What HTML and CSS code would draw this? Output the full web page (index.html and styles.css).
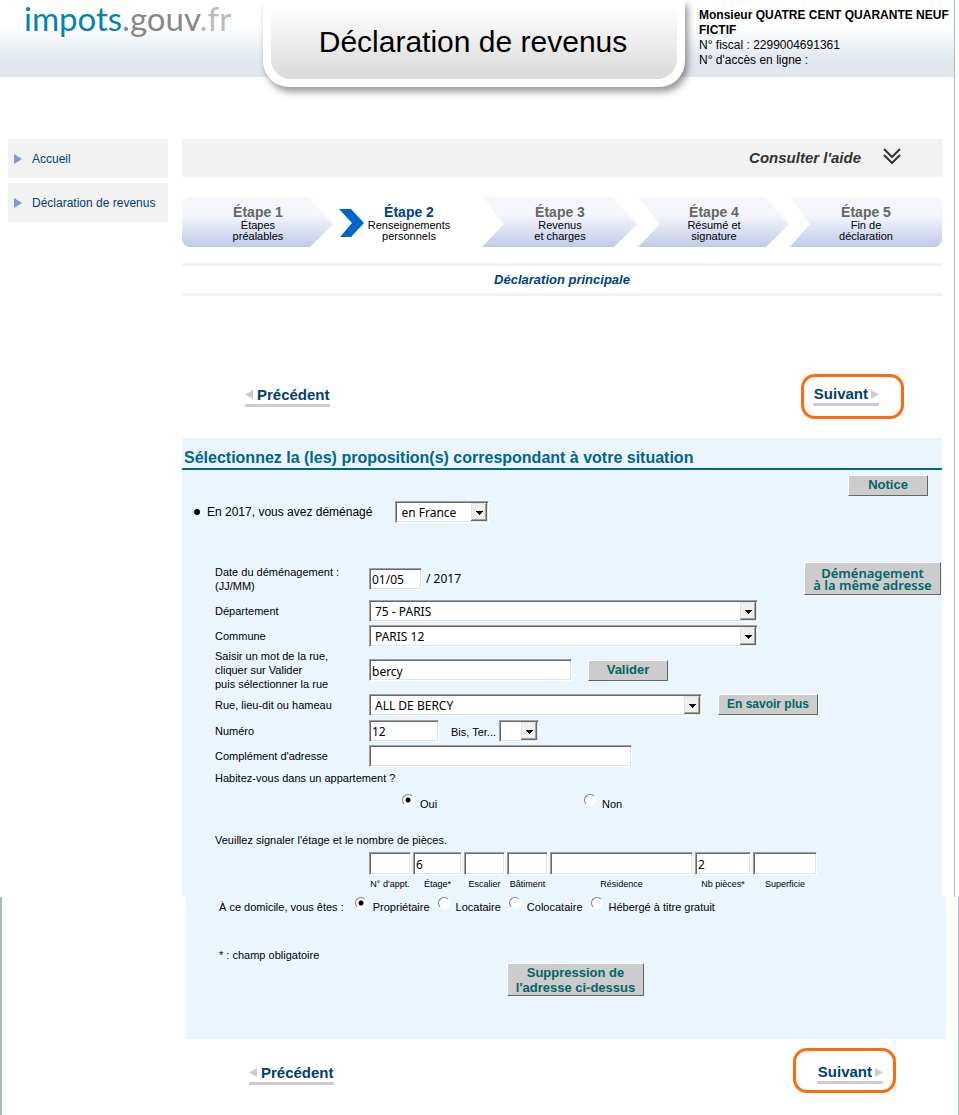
FILE: index.html
```html
<!DOCTYPE html>
<html lang="fr">
<head>
<meta charset="utf-8">
<title>impots.gouv.fr - Déclaration de revenus</title>
<link rel="stylesheet" href="styles.css">
</head>
<body>
<form class="page">
  <div class="sheet sheet-top">
    <header class="banner">
      <a class="logo" href="#"><span class="logo-main">impots</span><span class="logo-gouv">.gouv</span><span class="logo-fr">.fr</span></a>
      <h1 class="plaque"><span class="plaque-face">Déclaration de revenus</span></h1>
      <div class="user">
        <strong>Monsieur QUATRE CENT QUARANTE NEUF FICTIF</strong>
        <span>N° fiscal : 2299004691361</span>
        <span>N° d'accès en ligne :</span>
      </div>
    </header>

    <div class="columns">
      <nav class="sidebar">
        <a class="side-link" href="#"><svg width="8" height="10" viewBox="0 0 8 10"><path d="M0 0L8 5L0 10Z" fill="#8399d6"/></svg>Accueil</a>
        <a class="side-link" href="#"><svg width="8" height="10" viewBox="0 0 8 10"><path d="M0 0L8 5L0 10Z" fill="#8399d6"/></svg>Déclaration de revenus</a>
      </nav>

      <main class="main">
        <a class="help" href="#">Consulter l'aide
          <svg width="18" height="16" viewBox="0 0 18 16" fill="none" stroke="#333" stroke-width="2"><path d="M1 1L9 9L17 1M1 7L9 15L17 7"/></svg>
        </a>

        <ol class="steps">
          <li class="step step-first"><b>Étape 1</b><span>Étapes<br>préalables</span></li>
          <li class="step step-current">
            <svg width="25" height="28" viewBox="0 0 25 28"><path d="M0 0H12L25 14L12 28H1L13 14Z" fill="#0066cc"/></svg>
            <b>Étape 2</b><span>Renseignements<br>personnels</span></li>
          <li class="step step-mid"><b>Étape 3</b><span>Revenus<br>et charges</span></li>
          <li class="step step-mid"><b>Étape 4</b><span>Résumé et<br>signature</span></li>
          <li class="step step-last"><b>Étape 5</b><span>Fin de<br>déclaration</span></li>
        </ol>

        <p class="subtitle">Déclaration principale</p>

        <div class="pager">
          <a class="page-link" href="#"><svg width="8" height="9" viewBox="0 0 8 9"><path d="M8 0L0 4.500L8 9Z" fill="#ccc"/></svg>Précédent</a>
          <div class="highlight"><a class="page-link page-next" href="#">Suivant<svg width="8" height="9" viewBox="0 0 8 9"><path d="M0 0L8 4.500L0 9Z" fill="#ccc"/></svg></a></div>
        </div>

        <section class="panel">
          <h2 class="panel-title">Sélectionnez la (les) proposition(s) correspondant à votre situation</h2>
          <div class="notice-row"><button type="button" class="btn">Notice</button></div>
          <div class="move-row">
            <label for="move">En 2017, vous avez déménagé</label>
            <select id="move" class="field select-move"><option>en France</option></select>
          </div>

          <div class="rows">
            <div class="row row-date">
              <label for="date">Date du déménagement :<br>(JJ/MM)</label>
              <div class="controls">
                <input id="date" class="field input-date" type="text" value="01/05">
                <span class="year">/ 2017</span>
                <button type="button" class="btn btn-move">Déménagement<br>à la même adresse</button>
              </div>
            </div>
            <div class="row">
              <label for="dept">Département</label>
              <div class="controls"><select id="dept" class="field select-wide"><option>75 - PARIS</option></select></div>
            </div>
            <div class="row">
              <label for="city">Commune</label>
              <div class="controls"><select id="city" class="field select-wide"><option>PARIS 12</option></select></div>
            </div>
            <div class="row row-search">
              <label for="word">Saisir un mot de la rue,<br>cliquer sur Valider<br>puis sélectionner la rue</label>
              <div class="controls">
                <input id="word" class="field input-word" type="text" value="bercy">
                <button type="button" class="btn btn-after">Valider</button>
              </div>
            </div>
            <div class="row row-street">
              <label for="street">Rue, lieu-dit ou hameau</label>
              <div class="controls">
                <select id="street" class="field select-street"><option>ALL DE BERCY</option></select>
                <button type="button" class="btn btn-after btn-more">En savoir plus</button>
              </div>
            </div>
            <div class="row">
              <label for="num">Numéro</label>
              <div class="controls">
                <input id="num" class="field input-num" type="text" value="12">
                <label class="bis-label" for="bis">Bis, Ter...</label>
                <select id="bis" class="field select-bis"><option></option></select>
              </div>
            </div>
            <div class="row">
              <label for="extra">Complément d'adresse</label>
              <div class="controls"><input id="extra" class="field input-extra" type="text"></div>
            </div>
            <p class="question">Habitez-vous dans un appartement ?</p>
            <div class="yes-no">
              <label class="choice"><input type="radio" name="flat" checked><span>Oui</span></label>
              <label class="choice"><input type="radio" name="flat"><span>Non</span></label>
            </div>
            <p class="rooms-text">Veuillez signaler l'étage et le nombre de pièces.</p>
            <div class="rooms">
              <label><input class="field" type="text"><span>N° d'appt.</span></label>
              <label><input class="field" type="text" value="6"><span>Étage*</span></label>
              <label><input class="field" type="text"><span>Escalier</span></label>
              <label><input class="field" type="text"><span>Bâtiment</span></label>
              <label><input class="field" type="text"><span>Résidence</span></label>
              <label><input class="field" type="text" value="2"><span>Nb pièces*</span></label>
              <label><input class="field" type="text"><span>Superficie</span></label>
            </div>
          </div>
        </section>
      </main>
    </div>
  </div>

  <div class="sheet sheet-bottom">
    <section class="panel panel-bottom">
      <div class="status">
        <span class="status-label">À ce domicile, vous êtes :</span>
        <label class="choice"><input type="radio" name="status" checked><span>Propriétaire</span></label>
        <label class="choice"><input type="radio" name="status"><span>Locataire</span></label>
        <label class="choice"><input type="radio" name="status"><span>Colocataire</span></label>
        <label class="choice"><input type="radio" name="status"><span>Hébergé à titre gratuit</span></label>
      </div>
      <p class="required">* : champ obligatoire</p>
      <button type="button" class="btn btn-delete">Suppression de<br>l'adresse ci-dessus</button>
    </section>
    <div class="pager pager-bottom">
      <a class="page-link" href="#"><svg width="8" height="9" viewBox="0 0 8 9"><path d="M8 0L0 4.500L8 9Z" fill="#ccc"/></svg>Précédent</a>
      <div class="highlight highlight-bottom"><a class="page-link page-next" href="#">Suivant<svg width="8" height="9" viewBox="0 0 8 9"><path d="M0 0L8 4.500L0 9Z" fill="#ccc"/></svg></a></div>
    </div>
  </div>
</form>
</body>
</html>
```

FILE: styles.css
```css
* { box-sizing: border-box; }

body {
  margin: 0;
  background: #fff;
  color: #000;
  font: 11px/14px "Liberation Sans", Arial, sans-serif;
}

h1, h2, p, ol { margin: 0; padding: 0; font-weight: normal; }
a { text-decoration: none; }
svg { flex: none; }

.page { display: flex; flex-direction: column; min-height: 100vh; }
.sheet-top { margin-right: 4px; border-right: 1px solid #a9bcc5; }
.sheet-bottom {
  flex: 1;
  padding: 0 12px 20px 184px;
  border-left: 2px solid #a9bcc5;
  border-right: 1px solid #a9bcc5;
}

/* Banner */
.banner {
  display: flex;
  height: 77px;
  background: linear-gradient(#fff 26px, #e0e8ee 60px);
}
.logo {
  width: 263px;
  padding-left: 24px;
  font: 400 33px/36px Lato, sans-serif;
}
.logo-main { color: #0085b2; }
.logo-gouv { color: #888; }
.logo-fr { color: #bbb; }
.plaque {
  height: 87px;
  width: 422px;
  padding: 0 8px 8px;
  background: #fff;
  border-radius: 0 0 26px 26px;
  box-shadow: 3px 5px 7px rgba(0, 0, 0, 0.4);
  clip-path: inset(0 -20px -20px -4px);
}
.plaque-face {
  display: flex;
  justify-content: center;
  align-items: center;
  height: 79px;
  padding-top: 5px;
  padding-right: 2px;
  border-radius: 0 0 20px 20px;
  background: linear-gradient(#fff 6px, #f4f4f4 28px, #e3e3e3 60px, #dadada);
  font-size: 30px;
  line-height: 36px;
}
.user {
  flex: 1;
  display: flex;
  flex-direction: column;
  padding: 8px 4px 0 14px;
  font-size: 12px;
  line-height: 15px;
}

/* Columns */
.columns { display: flex; gap: 14px; padding: 62px 12px 0 8px; }
.sidebar { width: 160px; display: flex; flex-direction: column; gap: 5px; }
.side-link {
  display: flex;
  align-items: center;
  gap: 10px;
  height: 39px;
  padding-left: 6px;
  background: #f2f2f2;
  color: #003f72;
  font-size: 12px;
}
.main { flex: 1; min-width: 0; }
.help {
  display: flex;
  align-items: center;
  justify-content: flex-end;
  gap: 22px;
  height: 38px;
  padding-right: 41px;
  background: #f2f2f2;
  color: #333;
  font-size: 15px;
  font-weight: bold;
  font-style: italic;
}
.help svg { margin-bottom: 4px; }

/* Steps */
.steps {
  display: grid;
  grid-template-columns: 152fr 148fr 156fr 152fr 152fr;
  margin-top: 20px;
  list-style: none;
}
.step {
  display: flex;
  flex-direction: column;
  align-items: center;
  height: 50px;
  padding-top: 8px;
  background: linear-gradient(#f4f6fb 18px, #c0cae9);
  text-align: center;
  line-height: 11px;
}
.step b { color: #666; font-size: 14px; line-height: 15px; }
.step-first {
  border-radius: 8px 0 0 8px;
  clip-path: polygon(0 0, 126px 0, calc(100% - 1px) 27px, 128px 100%, 0 100%);
}
.step-mid {
  clip-path: polygon(0 0, calc(100% - 26px) 0, calc(100% - 1px) 27px, calc(100% - 24px) 100%, 0 100%, 22px 27px);
}
.step-last {
  border-radius: 0 8px 8px 0;
  clip-path: polygon(0 0, 100% 0, 100% 100%, 0 100%, 20px 27px);
}
.step-current {
  display: grid;
  grid-template-columns: 25px 1fr;
  grid-template-rows: 15px 22px;
  padding-left: 5px;
  padding-right: 28px;
  background: none;
}
.step-current svg { grid-row: 1 / 3; align-self: start; margin-top: 4px; }
.step-current b { color: #003f87; }

.subtitle {
  margin-top: 16px;
  border-top: 3px solid #f2f2f2;
  border-bottom: 3px solid #f2f2f2;
  color: #003f87;
  font-size: 13px;
  font-weight: bold;
  font-style: italic;
  line-height: 27px;
  text-align: center;
}

/* Previous and next links */
.pager {
  display: flex;
  justify-content: space-between;
  align-items: baseline;
  margin-top: 78px;
  padding: 0 38px 0 63px;
}
.page-link {
  display: flex;
  align-items: center;
  gap: 4px;
  border-bottom: 3px solid #ccc;
  color: #003f72;
  font-size: 15px;
  line-height: 18px;
  font-weight: bold;
}
.page-next { padding-left: 1px; gap: 3px; }
.highlight {
  padding: 8px 22px 10px 9px;
  border: 3px solid #ff6a0d;
  border-radius: 14px;
}
.pager-bottom { margin-top: 9px; padding-right: 50px; }
.highlight-bottom { padding: 12px 10px 6px 21px; }

/* Form panel */
.panel { background: #eaf5ff; }
.sheet-top .panel { margin-top: 19px; padding-bottom: 6px; }
.panel-title {
  padding: 10px 2px 0;
  border-bottom: 2px solid #00658a;
  color: #00658a;
  font-size: 16px;
  font-weight: bold;
  line-height: 20px;
}
.notice-row { display: flex; justify-content: flex-end; padding: 5px 14px 0 0; }
.move-row {
  display: flex;
  align-items: center;
  gap: 23px;
  height: 22px;
  margin-top: 5px;
  padding-left: 12px;
  font-size: 12px;
}
.move-row::before {
  content: "";
  width: 6px;
  height: 6px;
  margin-right: -16px;
  border-radius: 50%;
  background: #000;
}
.rows { margin-top: 39px; padding-left: 33px; }
.row {
  display: grid;
  grid-template-columns: 154px 1fr;
  align-items: center;
  min-height: 25px;
}
.row-date { min-height: 32px; margin-bottom: 3px; }
.row-search { min-height: 44px; }
.row-street { margin-bottom: 1px; }
.controls { display: flex; align-items: center; }

.field {
  height: 22px;
  margin: 0;
  padding: 2px 2px 0;
  border: 1px solid;
  border-color: #a0a0a0 #fff #fff #a0a0a0;
  border-radius: 0;
  outline: 0;
  background: #fff;
  box-shadow: inset 1px 1px #696969, inset -1px -1px #e3e3e3;
  color: #000;
  font: 12px/18px "Noto Sans", sans-serif;
}
select.field {
  appearance: none;
  padding-left: 5px;
  background: #fff url("data:image/svg+xml,%3Csvg xmlns='http://www.w3.org/2000/svg' width='16' height='18'%3E%3Cpath fill='%23e3e3e3' d='M0 0h16v18H0z'/%3E%3Cpath fill='%23696969' d='M15 0h1v18H0v-1h15z'/%3E%3Cpath fill='%23a0a0a0' d='M14 1h1v16H1v-1h13z'/%3E%3Cpath fill='%23f0f0f0' d='M1 1h13v15H1z'/%3E%3Cpath d='M5 8h7v1H5zM6 9h5v1H6zM7 10h3v1H7zM8 11h1v1H8z'/%3E%3C/svg%3E") no-repeat right 1px top 1px;
}
.select-move { width: 94px; }
.select-wide { width: 389px; }
.select-street { width: 333px; }
.select-bis { width: 40px; }
.input-date { width: 53px; }
.input-word { width: 203px; }
.input-num { width: 70px; }
.input-extra { width: 263px; }
.year { margin-left: 4px; font: 12px/18px "Noto Sans", sans-serif; }
.bis-label { margin: 3px 3px 0 12px; }

.btn {
  min-width: 80px;
  height: 21px;
  padding: 0 4px 1px;
  border: 1px solid;
  border-color: #fff #666 #666 #fff;
  border-radius: 0;
  background: #ccc;
  color: #066;
  font: bold 13px/14px "Liberation Sans", Arial, sans-serif;
}
.btn-after { margin-left: 16px; }
.btn-more { width: 100px; font-size: 12px; }
.btn-move {
  width: 137px;
  height: 33px;
  margin: 0 1px 0 auto;
  padding: 0;
  font: 600 13px/12px "Noto Sans", sans-serif;
}

.question { padding-top: 2px; line-height: 16px; }
.choice { display: flex; gap: 6px; }
.choice input {
  appearance: none;
  width: 12px;
  height: 12px;
  margin: 0;
  border: 1px solid;
  border-color: #808080 #fff #fff #808080;
  border-radius: 50%;
  background: #fff;
}
.choice input:checked { background: radial-gradient(circle, #000 2px, #fff 3px); }
.choice span { padding-top: 3px; }
.yes-no { display: grid; grid-template-columns: 182px 1fr; margin: 8px 0 0 187px; }
.rooms-text { margin-top: 22px; }
.rooms {
  display: grid;
  grid-template-columns: 42px 49px 41px 41px 143px 56px 64px;
  gap: 2px;
  margin: 5px 0 0 154px;
}
.rooms label {
  display: flex;
  flex-direction: column;
  align-items: center;
  gap: 2px;
  font-size: 9px;
  white-space: nowrap;
}
.rooms .field { width: 100%; height: 23px; }

/* Lower panel */
.panel-bottom { min-height: 142px; padding-left: 33px; }
.status { display: flex; gap: 8px; }
.status-label { padding: 3px 3px 0 0; }
.required { margin-top: 34px; }
.btn-delete {
  display: block;
  width: 137px;
  height: 33px;
  margin: 1px auto 0 288px;
  padding: 0;
  line-height: 15px;
}
```
